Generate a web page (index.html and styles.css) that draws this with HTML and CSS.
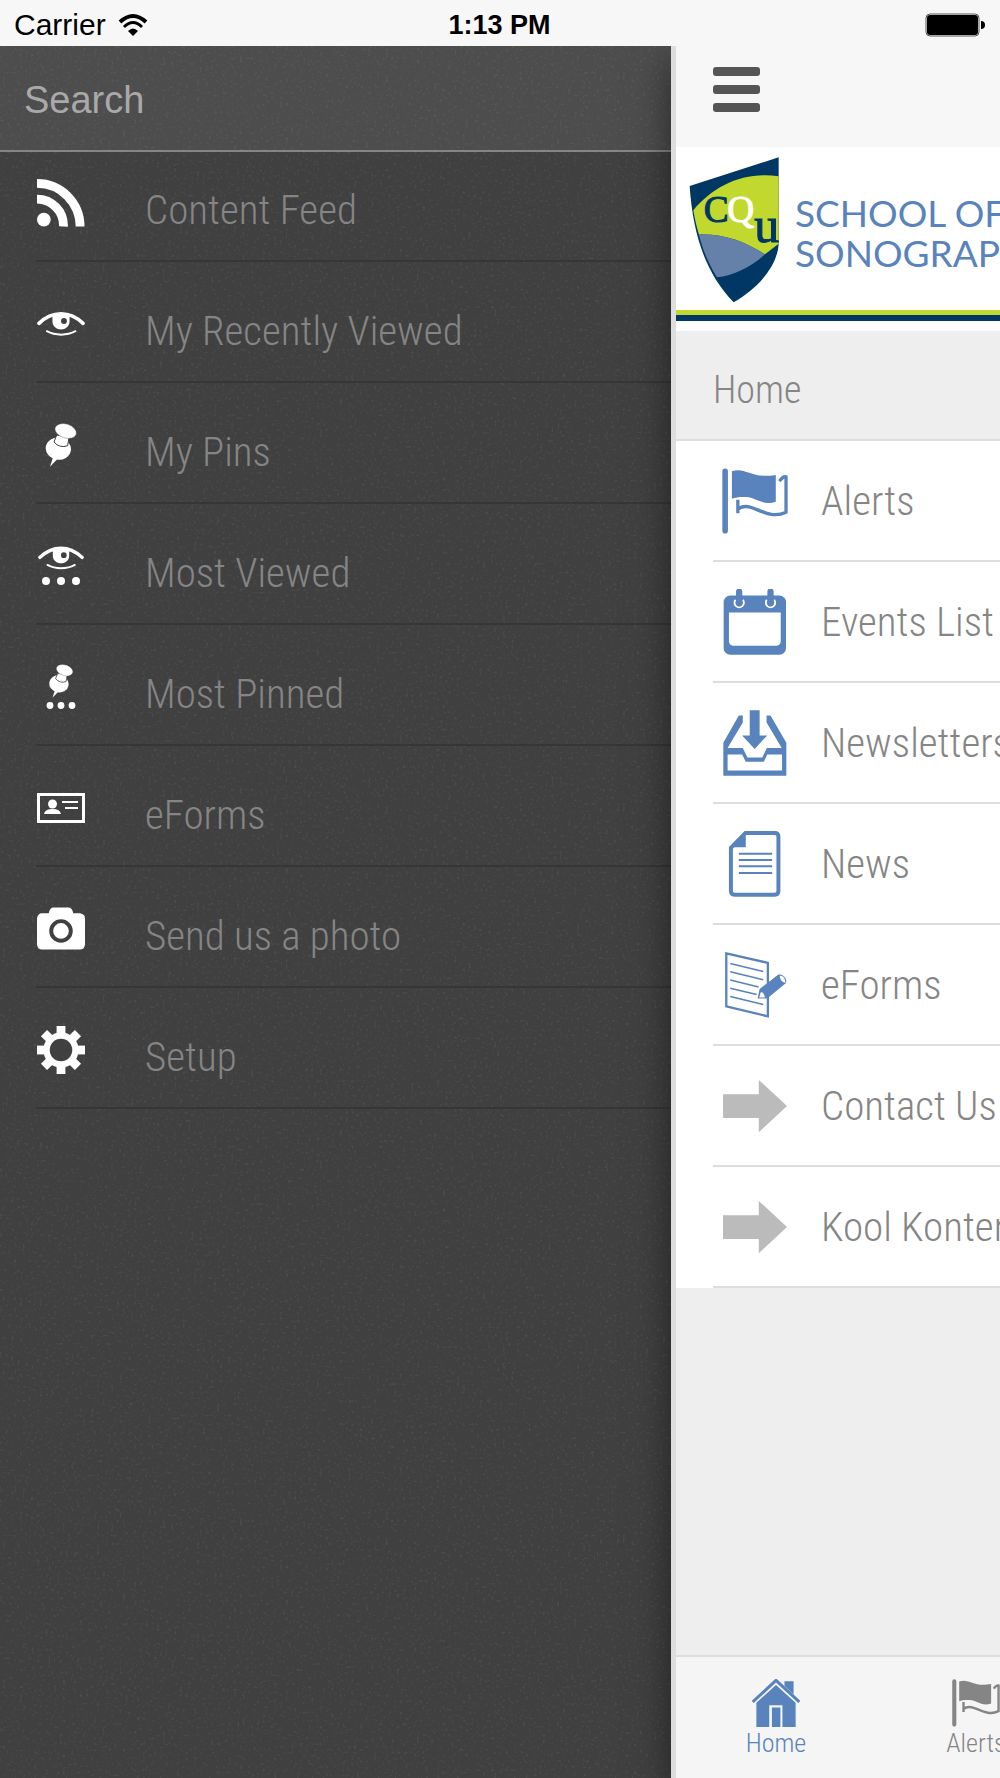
FILE: index.html
```html
<!DOCTYPE html>
<html lang="en">
<head>
    <meta charset="UTF-8">
    <meta name="viewport" content="width=device-width, initial-scale=1.0">
    <title>School of Sonography</title>
    <link rel="stylesheet" href="styles.css">
</head>
<body>
    <!-- shared icons -->
    <svg class="sprite" aria-hidden="true">
        <symbol id="i-flag" viewBox="185 88 200 200">
            <path d="M194.500 98V278" fill="none" stroke="currentColor" stroke-width="17" stroke-linecap="round"/>
            <path d="M215 98C257 84 272 122 348 109V190C310 204 288 178 260 176C240 175 226 177 215 181Z" fill="currentColor"/>
            <path d="M233 184V225M233 213C245 203 262 203 278 209C312 222 342 240 379 222V115C371 112 366 118 359 128" fill="none" stroke="currentColor" stroke-width="10"/>
        </symbol>
        <symbol id="i-eye" viewBox="109 95 146 76">
            <path d="M115 131C155 92 209 92 249 131" fill="none" stroke="#fff" stroke-width="11" stroke-linecap="round"/>
            <path d="M156 110C175 98 190 98 208 110V125C208 158 156 158 156 125Z" fill="#fff"/>
            <circle cx="191" cy="124" r="9" fill="#404040"/>
            <path d="M139 155C165 169 200 169 226 155" fill="none" stroke="#fff" stroke-width="6" stroke-linecap="round"/>
        </symbol>
        <symbol id="i-pin" viewBox="134 427 96 132">
            <path d="M158 530L149 558L172 534Z" fill="#fff"/>
            <ellipse cx="174" cy="504" rx="38" ry="33" fill="#fff" transform="rotate(10 174 504)"/>
            <path d="M169 463L161 484Q178 504 202 495L206 470Z" fill="#fff" stroke="#404040" stroke-width="3"/>
            <ellipse cx="196" cy="451" rx="33" ry="21" fill="#fff" stroke="#404040" stroke-width="1" transform="rotate(18 196 451)"/>
        </symbol>
        <symbol id="i-arrow" viewBox="188 480 192 158">
            <path d="M191 525H295V483L377 559L295 635V594H191Z" fill="#bbb"/>
        </symbol>
    </svg>

    <header class="status-bar">
        <div class="carrier">Carrier
            <svg width="30" height="24" viewBox="0 0 30 24">
                <path d="M2 9Q15 -3 28 9" fill="none" stroke="#000" stroke-width="4"/>
                <path d="M6 14Q15 5 24 14" fill="none" stroke="#000" stroke-width="3"/>
                <path d="M10 18Q15 13 20 18L15 23Z"/>
            </svg>
        </div>
        <div class="clock">1:13 PM</div>
        <div class="battery">
            <svg width="60" height="24" viewBox="0 0 60 24">
                <rect x="1" y="1" width="53" height="22" rx="4" fill="none" stroke="#555" stroke-width="1"/>
                <rect x="2" y="2" width="51" height="20" rx="3"/>
                <path d="M56 8Q60 8 60 12Q60 16 56 16Z"/>
            </svg>
        </div>
    </header>

    <main class="screen">
        <aside class="drawer">
            <svg class="grain" aria-hidden="true">
                <filter id="grain">
                    <feTurbulence type="fractalNoise" baseFrequency="0.35" numOctaves="2" seed="4"/>
                    <feColorMatrix values="1 0 0 0 0  0 1 0 0 0  0 0 1 0 0  0 0 0 6 -3.500"/>
                </filter>
                <rect width="100%" height="100%" filter="url(#grain)"/>
            </svg>
            <form class="search">
                <input type="search" placeholder="Search" aria-label="Search">
            </form>
            <nav>
                <ul class="menu">
                    <li><a href="#">
                        <span class="menu-icon"><svg width="48" height="48" viewBox="0 0 49 48"><circle cx="7" cy="41" r="7" fill="#fff"/><path d="M0 20A27 27 0 0 1 27 48M0 4A44 44 0 0 1 44 48" fill="none" stroke="#fff" stroke-width="9"/></svg></span>
                        Content Feed
                    </a></li>
                    <li><a href="#">
                        <span class="menu-icon"><svg width="48" height="26"><use href="#i-eye"/></svg></span>
                        My Recently Viewed
                    </a></li>
                    <li><a href="#">
                        <span class="menu-icon"><svg width="32" height="44"><use href="#i-pin"/></svg></span>
                        My Pins
                    </a></li>
                    <li><a href="#">
                        <span class="menu-icon stacked"><svg width="46" height="24"><use href="#i-eye"/></svg><svg width="38" height="8" viewBox="0 0 38 8"><g fill="#fff"><circle cx="4" cy="4" r="4"/><circle cx="19" cy="4" r="4"/><circle cx="34" cy="4" r="4"/></g></svg></span>
                        Most Viewed
                    </a></li>
                    <li><a href="#">
                        <span class="menu-icon stacked pinned"><svg width="34" height="34"><use href="#i-pin"/></svg><svg width="30" height="7" viewBox="0 0 30 7"><g fill="#fff"><circle cx="4" cy="3.500" r="3.400"/><circle cx="15" cy="3.500" r="3.400"/><circle cx="26" cy="3.500" r="3.400"/></g></svg></span>
                        Most Pinned
                    </a></li>
                    <li><a href="#">
                        <span class="menu-icon"><svg width="48" height="30" viewBox="0 0 48 30"><rect x="1.500" y="1.500" width="45" height="27" fill="none" stroke="#fff" stroke-width="3"/><circle cx="15.500" cy="11" r="4.500" fill="#fff"/><path d="M7 21Q8 16 15.500 16Q23 16 24 21Z" fill="#fff"/><path d="M25 9H41M28 15H41" stroke="#fff" stroke-width="2"/></svg></span>
                        eForms
                    </a></li>
                    <li><a href="#">
                        <span class="menu-icon"><svg width="48" height="43" viewBox="0 0 49 43"><path d="M5 6H12Q13 0 17 0H32Q36 0 37 6H44Q49 7 49 11V38Q48 43 44 43H5Q1 43 0 38V11Q1 6 5 6Z" fill="#fff"/><circle cx="24.500" cy="24" r="10" fill="none" stroke="#404040" stroke-width="4"/></svg></span>
                        Send us a photo
                    </a></li>
                    <li><a href="#">
                        <span class="menu-icon"><svg width="48" height="48" viewBox="-24.500 -24.500 49 49"><g fill="#fff"><rect x="-4.500" y="-24.500" width="9" height="49"/><rect x="-4.500" y="-24.500" width="9" height="49" transform="rotate(45)"/><rect x="-4.500" y="-24.500" width="9" height="49" transform="rotate(90)"/><rect x="-4.500" y="-24.500" width="9" height="49" transform="rotate(135)"/><circle r="18"/></g><circle r="11.500" fill="#404040"/></svg></span>
                        Setup
                    </a></li>
                </ul>
            </nav>
        </aside>

        <section class="panel">
            <div class="navbar">
                <button class="hamburger" type="button" aria-label="Menu"><i></i><i></i><i></i></button>
            </div>
            <div class="brand">
                <svg class="shield" viewBox="88 50 270 438" role="img" aria-label="CQU">
                    <path d="M90 137L357 51V310C353 380 292 445 222 486C142 404 100 290 90 137Z" fill="#003764"/>
                    <path d="M101 210C162 136 252 93 357 108V310L316 342C255 303 190 280 118 283C111 260 105 235 101 210Z" fill="#c1d82f"/>
                    <path d="M118 283C190 280 255 303 316 342C270 383 220 405 172 411C146 370 128 325 118 283Z" fill="#6581aa"/>
                    <g font-family="Liberation Serif, serif" stroke-width="3">
                        <text x="132" y="245" font-size="112" fill="#003764" stroke="#003764">C</text>
                        <text x="203" y="245" font-size="112" fill="#fff" stroke="#fff">Q</text>
                        <text x="284" y="305" font-size="150" fill="#003764" stroke="#003764">u</text>
                    </g>
                </svg>
                <div class="brand-name">School of<br>Sonography</div>
            </div>
            <h1 class="page-title">Home</h1>
            <ul class="links">
                <li><a href="#"><svg class="link-icon"><use href="#i-flag"/></svg>Alerts</a></li>
                <li><a href="#">
                    <svg class="link-icon" viewBox="185 450 200 200"><rect x="190" y="470" width="189" height="179" rx="20" fill="#5883bc"/><path d="M206 521H363V608Q362 620 350 622H219Q207 620 206 608Z" fill="#fff"/><g fill="none" stroke="#fff" stroke-width="6"><path d="M226 483A14 14 0 1 0 248 483M321 483A14 14 0 1 0 343 483"/></g><path d="M237 458V493M332 458V493" stroke="#5883bc" stroke-width="19" stroke-linecap="round"/></svg>
                    Events List</a></li>
                <li><a href="#">
                    <svg class="link-icon" viewBox="185 92 200 200"><path d="M269 93H299V169H322L284 210L246 169H269Z" fill="#5883bc"/><path d="M236 109H248V130L202 207H248L262 236H307L321 207H366L320 130V109H332L380 191V291H189V191ZM202 227V275H367V227H322L312 249H257L246 227Z" fill="#5883bc" fill-rule="evenodd"/></svg>
                    Newsletters</a></li>
                <li><a href="#">
                    <svg class="link-icon" viewBox="185 455 200 200"><path d="M256 461H345Q356 461 356 472V637Q356 648 345 648H223Q212 648 212 637V506Z" fill="none" stroke="#5883bc" stroke-width="12"/><path d="M208 504L257 456V504Z" fill="#5883bc"/><path d="M236 524H337M236 543H337M236 562H337M236 582H337" stroke="#5883bc" stroke-width="6"/></svg>
                    News</a></li>
                <li><a href="#">
                    <svg class="link-icon" viewBox="185 97 200 200"><path d="M198 101L324 130V292L198 262Z" fill="none" stroke="#5883bc" stroke-width="7"/><path d="M210 132L310 156M210 157L310 181M210 182L296 203M210 207L290 226M210 232L310 256" stroke="#5883bc" stroke-width="5"/><path d="M293 238L299 209L354 167C366 160 386 180 378 192L322 238Z" fill="#5883bc"/><path d="M298 235L302 220Q312 216 315 235ZM360 169C370 167 378 180 377 190C368 190 360 180 360 169Z" fill="#fff"/></svg>
                    eForms</a></li>
                <li><a href="#"><svg class="link-icon"><use href="#i-arrow"/></svg>Contact Us</a></li>
                <li><a href="#"><svg class="link-icon"><use href="#i-arrow"/></svg>Kool Kontent</a></li>
            </ul>
            <nav class="tabs">
                <a class="active" href="#">
                    <svg width="48" height="48" viewBox="282 148 142 142"><path d="M284 216L353 152L422 216" fill="none" stroke="currentColor" stroke-width="9"/><path d="M378 155H405V194L378 168ZM295 218L353 166L411 218V290H372V226H333V290H295ZM341 232H366V290H341Z" fill="currentColor"/></svg>
                    Home
                </a>
                <a href="#"><svg width="48" height="48"><use href="#i-flag"/></svg>Alerts</a>
            </nav>
        </section>
    </main>
</body>
</html>
```
FILE: styles.css
```css
* {
    box-sizing: border-box;
}
body {
    margin: 0;
    min-height: 100vh;
    display: flex;
    flex-direction: column;
    background: #f7f7f7;
    color: #858585;
    font-family: "Roboto Condensed", Roboto, sans-serif;
    font-weight: 300;
    font-size: 41px;
    overflow-x: hidden;
}
a {
    color: inherit;
    text-decoration: none;
}
ul {
    list-style: none;
    margin: 0;
    padding: 0;
}
svg {
    display: block;
    flex-shrink: 0;
}
.sprite {
    position: absolute;
    width: 0;
    height: 0;
}

/* status bar */
.status-bar {
    display: grid;
    grid-template-columns: 1fr auto 1fr;
    align-items: center;
    height: 46px;
    padding: 4px 15px 0 14px;
    color: #000;
    font-family: "Liberation Sans", Arial, sans-serif;
    font-weight: 400;
    font-size: 30px;
}
.carrier {
    display: flex;
    align-items: center;
    gap: 12px;
}
.clock {
    font-size: 27px;
    font-weight: 700;
}
.battery {
    justify-self: end;
}

.screen {
    flex: 1;
    display: flex;
    overflow: hidden;
}

/* left drawer */
.drawer {
    position: relative;
    flex: 0 0 calc(67% + 1px);
    background: #404040;
}
.grain {
    position: absolute;
    inset: 0;
    width: 100%;
    height: 100%;
    opacity: 0.08;
    pointer-events: none;
}
.search {
    border-bottom: 2px solid #858585;
    background: rgba(255, 255, 255, 0.07);
}
.search input {
    display: block;
    width: 100%;
    height: 104px;
    padding: 4px 24px 0;
    border: 0;
    outline: 0;
    background: none;
    color: #fff;
    font-family: "Liberation Sans", Arial, sans-serif;
    font-size: 38px;
}
.search input::placeholder {
    color: #a9a9a9;
    opacity: 1;
}
.menu {
    margin-top: -11px;
    padding-left: 36px;
}
.menu li {
    position: relative;
    border-bottom: 2px solid #363636;
}
.menu a {
    display: flex;
    align-items: center;
    gap: 60px;
    height: 119px;
    padding-top: 18px;
}
.menu-icon {
    display: flex;
    align-items: center;
    justify-content: center;
    width: 49px;
    height: 50px;
    margin-top: -14px;
}
.stacked {
    flex-direction: column;
    gap: 7px;
}
.pinned {
    gap: 4px;
}

/* sliding page */
.panel {
    position: relative;
    flex: 1;
    min-width: 0;
    display: flex;
    flex-direction: column;
    border-left: 5px solid #ddd;
    background: #eee;
    box-shadow: 0 16px 36px rgba(0, 0, 0, 0.5);
    white-space: nowrap;
}
.panel > * {
    overflow: hidden;
}
.navbar {
    height: 101px;
    padding: 21px 37px;
    background: #f7f7f7;
}
.hamburger {
    display: flex;
    flex-direction: column;
    gap: 9px;
    width: 47px;
    padding: 0;
    border: 0;
    background: none;
    cursor: pointer;
}
.hamburger i {
    height: 9px;
    width: 100%;
    border-radius: 3px;
    background: #555;
}
.brand {
    display: flex;
    gap: 16px;
    height: 184px;
    padding: 10px 0 0 13px;
    background: linear-gradient(#fff 163px, #c1d82f 163px, #c1d82f 168px, #003764 168px, #003764 174px, #fff 174px);
}
.shield {
    width: 90px;
    height: 146px;
}
.brand-name {
    padding-top: 36px;
    color: #5883bc;
    font-family: Lato, sans-serif;
    font-size: 37px;
    font-weight: 400;
    line-height: 40px;
    text-transform: uppercase;
}
.page-title {
    flex-shrink: 0;
    height: 110px;
    margin: 0;
    padding-left: 37px;
    border-bottom: 2px solid #ddd;
    font-size: 38px;
    font-weight: 300;
    line-height: 118px;
}
.links {
    flex-shrink: 0;
    padding-left: 37px;
    background: #fff;
}
.links a {
    display: flex;
    align-items: center;
    gap: 33px;
    height: 121px;
    padding-left: 9px;
    border-bottom: 2px solid #ddd;
}
.link-icon {
    width: 66px;
    height: 66px;
    color: #5883bc;
}
.tabs {
    display: flex;
    flex-shrink: 0;
    height: 123px;
    margin-top: auto;
    border-top: 2px solid #ddd;
    background: #f5f5f5;
    font-size: 26px;
}
.tabs a {
    display: flex;
    flex: 0 0 200px;
    flex-direction: column;
    align-items: center;
    padding-top: 22px;
    line-height: 32px;
}
.tabs .active {
    color: #5883bc;
}
```
